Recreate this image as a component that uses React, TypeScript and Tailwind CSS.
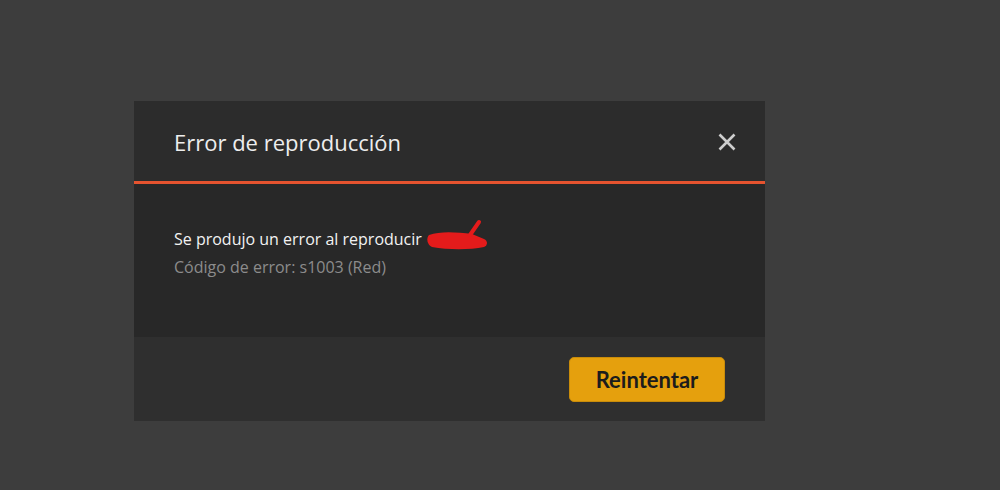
export default function App() {
  return (
    <div className="min-h-[490px] w-full bg-[#3d3d3d] pl-[134px] pt-[101px]" style={{ fontFamily: '"Open Sans", "Noto Sans", sans-serif' }}>
      <div className="flex w-[631px] flex-col">
        {/* header */}
        <div className="flex h-[83px] items-center justify-between border-b-[3px] border-[#e5532f] bg-[#2c2c2c] pl-10 pr-[26px] pt-0.5">
          <h1 className="text-[22px] text-[#eeeeee]">Error de reproducción</h1>
          <button className="flex h-6 w-6 items-center justify-center">
            <svg width="18" height="18" viewBox="0 0 18 18">
              <path d="M1.5 1.5L16.5 16.5M16.5 1.5L1.5 16.5" stroke="#cfcfcf" strokeWidth="2.6" strokeLinecap="butt" />
            </svg>
          </button>
        </div>

        {/* body */}
        <div className="h-[153px] bg-[#282828] pl-10 pt-[41px] text-[16px]">
          <div className="flex h-7 items-center text-[#f2f2f2]">
            <span>Se produjo un error al reproducir</span>
            <svg className="-mt-2 ml-[4px]" width="64" height="32" viewBox="0 0 64 32">
              <path d="M3 16 C14 12 30 13 46 15 L58 20 C62 22 62 26 58 28 C44 31 22 31 6 28 C1 26 0 19 3 16 Z" fill="#e41b1b" />
              <path d="M44 16 L53 3" stroke="#e41b1b" strokeWidth="4" strokeLinecap="round" />
            </svg>
          </div>
          <div className="flex h-7 items-center text-[#8c8c8c]">Código de error: s1003 (Red)</div>
        </div>

        {/* footer */}
        <div className="flex h-[84px] items-start justify-end bg-[#2f2f2f] pr-10 pt-5">
          <button
            className="h-[45px] w-[156px] rounded-[5px] border border-[#c98c0a] bg-[#e5a00d] text-[22px] font-bold text-[#1c1c1c]"
            style={{ fontFamily: 'Lato, "Open Sans", sans-serif' }}
          >
            Reintentar
          </button>
        </div>
      </div>
    </div>
  );
}
